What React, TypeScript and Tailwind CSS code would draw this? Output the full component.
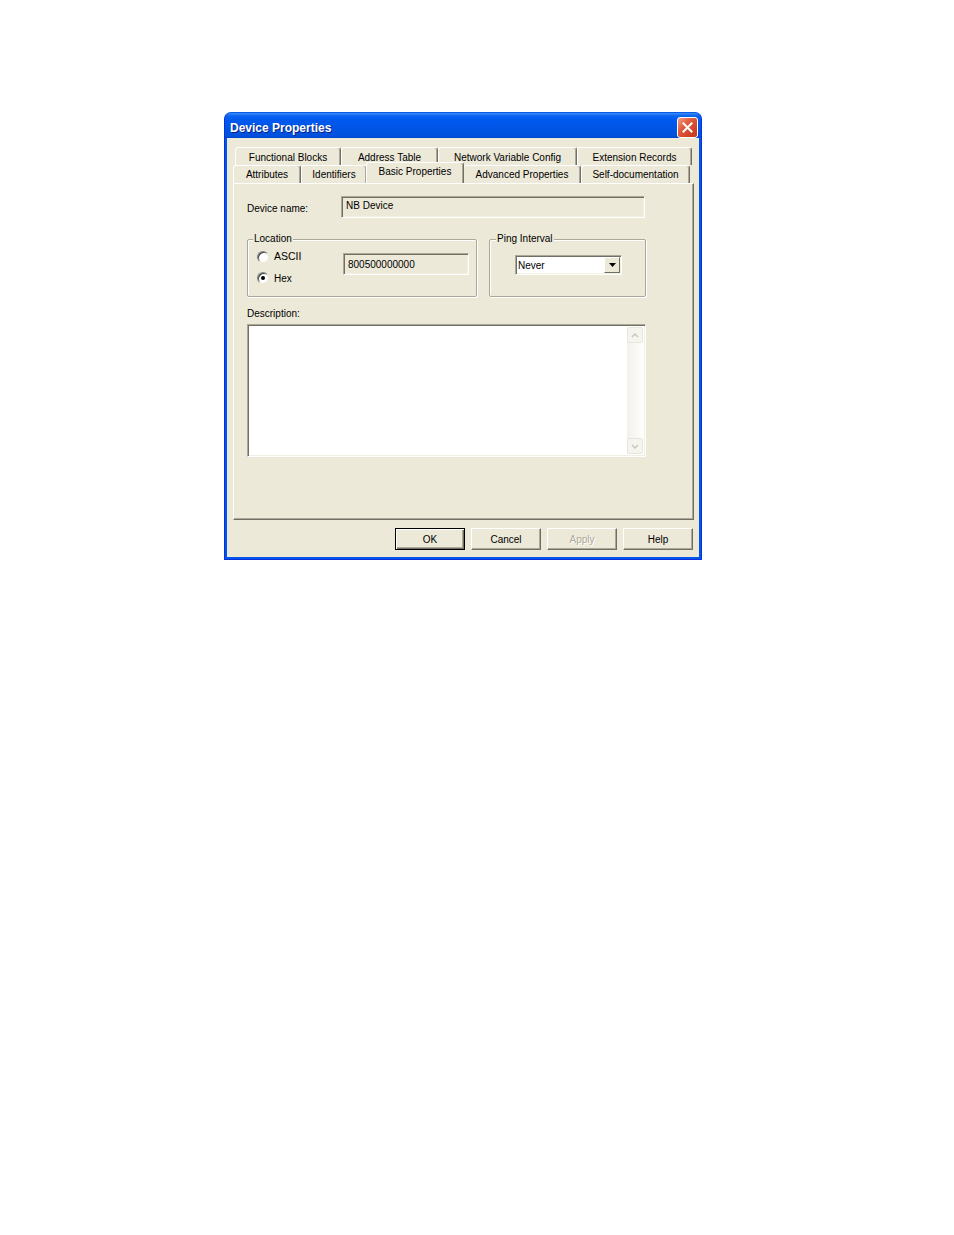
import React from "react";

const font = { fontFamily: '"Liberation Sans", Arial, sans-serif' };

function Tab({ label, w, selected = false, top = false }: { label: string; w: number; selected?: boolean; top?: boolean }) {
  return (
    <div
      className={
        "relative flex items-center justify-center rounded-t-[3px] border-l border-t border-white border-r border-r-[#716F64] shadow-[inset_-1px_0_0_#ACA899] bg-[#ECE9D8] text-black " +
        (selected ? "h-[21px] -mt-[2px] z-10 -mx-[1px] pb-[3px]" : top ? "h-[18px] pt-[2px]" : "h-[18px] pt-[1px]")
      }
      style={{ width: w }}
    >
      <span className="leading-none">{label}</span>
    </div>
  );
}

function Radio({ checked }: { checked?: boolean }) {
  return (
    <div className="w-[12px] h-[12px] rounded-full bg-white border border-t-[#808080] border-l-[#808080] border-b-[#ECE9D8] border-r-[#ECE9D8] shadow-[inset_1px_1px_0_#404040] flex items-center justify-center">
      {checked && <div className="w-[4px] h-[4px] rounded-full bg-black" />}
    </div>
  );
}

function Button({ label, disabled, def }: { label: string; disabled?: boolean; def?: boolean }) {
  return (
    <div
      className={
        "w-[70px] h-[22px] flex items-center justify-center bg-[#ECE9D8] " +
        (def
          ? "border border-black shadow-[inset_1px_1px_0_#fff,inset_-1px_-1px_0_#716F64,inset_-2px_-2px_0_#ACA899]"
          : "border border-t-white border-l-white border-r-[#716F64] border-b-[#716F64] shadow-[inset_-1px_-1px_0_#ACA899]")
      }
    >
      <span className={disabled ? "text-[#ACA899] [text-shadow:1px_1px_0_#fff]" : "text-black"}>{label}</span>
    </div>
  );
}

const sunken =
  "border border-t-[#ACA899] border-l-[#ACA899] border-b-white border-r-white shadow-[inset_1px_1px_0_#716F64,inset_-1px_-1px_0_#F1EFE2]";

export default function App() {
  return (
    <div className="w-[954px] h-[1235px] bg-white pl-[224px] pt-[112px] text-[10px]" style={font}>
      <div className="w-[478px] h-[448px] flex flex-col rounded-t-[7px] bg-[#0055EA] border border-[#0831D9] border-t-[#0B5BE8]">
        {/* Title bar */}
        <div className="h-[25px] flex items-center justify-between pl-[5px] pr-[3px] pt-[3px] rounded-t-[6px] bg-[linear-gradient(to_bottom,#3D8DF6_0%,#0A63F0_12%,#0058EE_30%,#0054E3_70%,#0050DC_92%,#0042CF_100%)]">
          <span className="text-white font-bold text-[12px] pt-[2px] [text-shadow:1px_1px_0_#0A1E80]">Device Properties</span>
          <div className="w-[21px] h-[21px] rounded-[3px] border border-white bg-[linear-gradient(135deg,#F0A38E_0%,#E2603F_35%,#D1452A_70%,#C0391E_100%)] flex items-center justify-center">
            <svg width="11" height="11" viewBox="0 0 11 11">
              <path d="M1.5 1.5 L9.5 9.5 M9.5 1.5 L1.5 9.5" stroke="#fff" strokeWidth="2" strokeLinecap="square" />
            </svg>
          </div>
        </div>
        {/* Content */}
        <div className="flex-1 mx-[2px] mb-[2px] bg-[#ECE9D8] flex flex-col pt-[9px]">
          {/* Tab row 1 */}
          <div className="flex pl-[8px]">
            <Tab label="Functional Blocks" w={106} top />
            <Tab label="Address Table" w={97} top />
            <Tab label="Network Variable Config" w={139} top />
            <Tab label="Extension Records" w={115} top />
          </div>
          {/* Tab row 2 */}
          <div className="flex pl-[6px] h-[18px] items-end">
            <Tab label="Attributes" w={68} />
            <Tab label="Identifiers" w={66} />
            <Tab label="Basic Properties" w={98} selected />
            <Tab label="Advanced Properties" w={118} />
            <Tab label="Self-documentation" w={109} />
          </div>
          {/* Panel */}
          <div className="ml-[6px] w-[461px] h-[337px] border border-t-white border-l-white border-r-[#716F64] border-b-[#716F64] shadow-[inset_-1px_-1px_0_#ACA899] pl-[13px] pt-[12px] flex flex-col">
            {/* Device name */}
            <div className="flex items-center h-[22px]">
              <span className="w-[94px] pt-[2px]">Device name:</span>
              <div className={"w-[304px] h-[22px] flex items-start pl-[4px] pt-[1px] bg-[#ECE9D8] " + sunken}>NB Device</div>
            </div>
            {/* Groups */}
            <div className="flex gap-[12px] mt-[21px]">
              <div className="relative w-[230px] h-[58px] border border-[#ACA899] shadow-[inset_1px_1px_0_#fff,1px_1px_0_#fff] rounded-[2px]">
                <span className="absolute -top-[7px] left-[5px] bg-[#ECE9D8] px-[1px] leading-[12px]">Location</span>
                <div className="flex pt-[11px] pl-[9px]">
                  <div className="flex flex-col gap-[9px] w-[86px]">
                    <div className="flex items-center gap-[5px] h-[12px]">
                      <Radio />
                      <span className="text-[10.5px]">ASCII</span>
                    </div>
                    <div className="flex items-center gap-[5px] h-[12px]">
                      <Radio checked />
                      <span>Hex</span>
                    </div>
                  </div>
                  <div className={"mt-[2px] w-[126px] h-[22px] pl-[4px] pt-[3px] bg-[#ECE9D8] " + sunken}>800500000000</div>
                </div>
              </div>
              <div className="relative w-[157px] h-[58px] border border-[#ACA899] shadow-[inset_1px_1px_0_#fff,1px_1px_0_#fff] rounded-[2px]">
                <span className="absolute -top-[7px] left-[6px] bg-[#ECE9D8] px-[1px] leading-[12px]">Ping Interval</span>
                <div className="pt-[15px] pl-[25px]">
                  <div className={"w-[107px] h-[20px] flex items-center bg-white " + sunken}>
                    <span className="flex-1 pl-[2px]">Never</span>
                    <div className="w-[16px] h-[16px] mr-[1px] bg-[#ECE9D8] border border-t-white border-l-white border-r-[#716F64] border-b-[#716F64] flex items-center justify-center">
                      <svg width="7" height="4" viewBox="0 0 7 4">
                        <path d="M0 0 H7 L3.5 4 Z" fill="#000" />
                      </svg>
                    </div>
                  </div>
                </div>
              </div>
            </div>
            {/* Description */}
            <div className="mt-[11px] h-[16px] leading-[12px]">Description:</div>
            <div className={"w-[399px] h-[133px] bg-white flex justify-end p-[2px] " + sunken}>
              <div className="w-[16px] h-full bg-[linear-gradient(to_right,#F3F1EC,#FEFEFB)] flex flex-col justify-between">
                <div className="h-[16px] rounded-[2px] border border-[#E8E6DE] bg-[#F5F4EF] flex items-center justify-center">
                  <svg width="8" height="5" viewBox="0 0 8 5">
                    <path d="M1 4 L4 1 L7 4" stroke="#C9C7BA" strokeWidth="1.5" fill="none" />
                  </svg>
                </div>
                <div className="h-[16px] rounded-[2px] border border-[#E8E6DE] bg-[#F5F4EF] flex items-center justify-center">
                  <svg width="8" height="5" viewBox="0 0 8 5">
                    <path d="M1 1 L4 4 L7 1" stroke="#C9C7BA" strokeWidth="1.5" fill="none" />
                  </svg>
                </div>
              </div>
            </div>
          </div>
          {/* Buttons */}
          <div className="flex justify-end gap-[6px] pr-[6px] mt-[8px]">
            <Button label="OK" def />
            <Button label="Cancel" />
            <Button label="Apply" disabled />
            <Button label="Help" />
          </div>
        </div>
      </div>
    </div>
  );
}
